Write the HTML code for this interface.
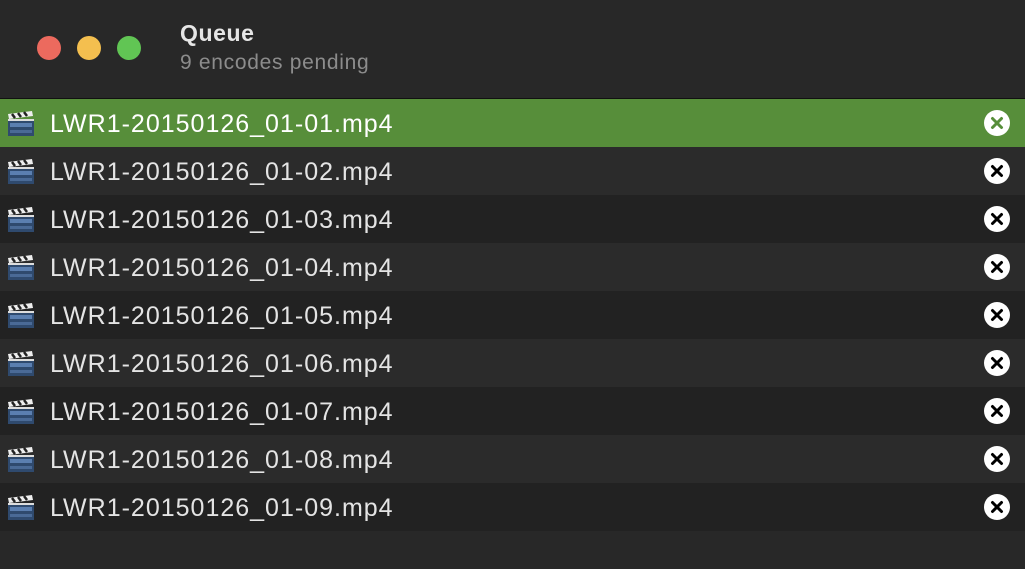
<!DOCTYPE html><html><head><style>
body{margin:0;width:1025px;height:569px;background:#282828;font-family:"Liberation Sans",sans-serif;overflow:hidden;position:relative}
.hdr{position:absolute;left:0;top:0;width:1025px;height:98px;background:#282828;border-bottom:1px solid #111}
.dot{position:absolute;top:36px;width:24px;height:24px;border-radius:50%}
.t{position:absolute;left:180px;top:20px;color:#e6e6e6;font-weight:bold;font-size:23px;letter-spacing:0.6px}
.s{position:absolute;left:180px;top:51px;color:#8c8c8c;font-size:21px;letter-spacing:0.7px}
.row{position:absolute;left:0;width:1025px;height:48px}
.row span{position:absolute;left:50px;top:11px;font-size:25px;letter-spacing:1.0px;color:#e4e4e4}
.ic{position:absolute;left:7px;top:12px}
.x{position:absolute;left:984px;top:11px}
</style></head><body>
<div class="hdr"></div>
<div class="dot" style="left:37px;background:#ec6a5e"></div>
<div class="dot" style="left:77px;background:#f4bf4f"></div>
<div class="dot" style="left:117px;background:#61c554"></div>
<div class="t">Queue</div><div class="s">9 encodes pending</div>
<div id="rows"></div>
<script>
var h='';for(var i=0;i<9;i++){var bg=i==0?'#578e3a':(i%2?'#2b2b2b':'#222');var c=i==0?'#578e3a':'#000';
h+='<div class="row" style="top:'+(99+i*48)+'px;background:'+bg+'"><svg class="ic" width="28" height="26" viewBox="0 0 28 26"><rect x="1" y="9" width="26" height="16" fill="#2f4a6e"/><rect x="3" y="12" width="22" height="4" fill="#5b7fb0"/><rect x="3" y="19" width="22" height="3" fill="#4a6a96"/><path d="M1 3 L25 0 L26 5 L2 8Z" fill="#eee"/><path d="M5 3l3 4M11 2l3 4M17 1l3 4" stroke="#222" stroke-width="2.5"/><rect x="1" y="8" width="26" height="2" fill="#ddd"/></svg><span'+(i==0?' style="color:#fff"':'')+'>LWR1-20150126_01-0'+(i+1)+'.mp4</span><svg class="x" width="26" height="26" viewBox="0 0 26 26"><circle cx="13" cy="13" r="13" fill="#fff"/><path d="M8.5 8.5L17.5 17.5M17.5 8.5L8.5 17.5" stroke="'+c+'" stroke-width="3" stroke-linecap="round"/></svg></div>';}
document.getElementById('rows').innerHTML=h;
</script>
</body></html>
